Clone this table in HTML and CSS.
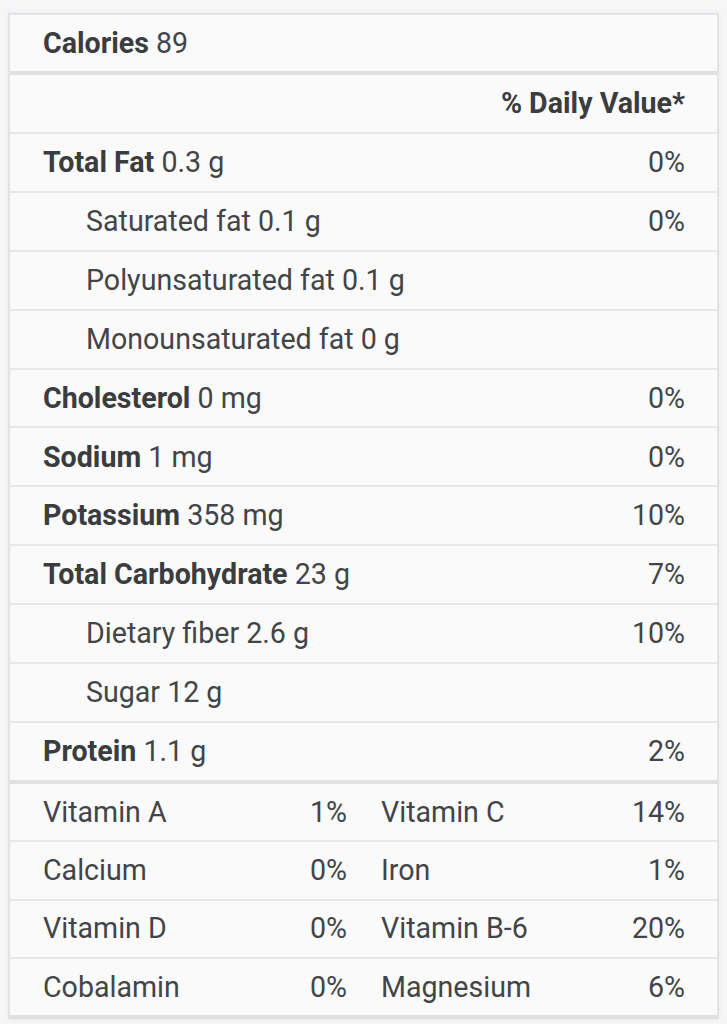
FILE: index.html
```html
<!DOCTYPE html>
<html>
<head>
<meta charset="utf-8">
<link rel="stylesheet" href="styles.css">
</head>
<body>
<div class="label">
  <div class="row row-cal"><span><b>Calories</b> 89</span></div>
  <div class="row row-dv"><span></span><b>% Daily Value*</b></div>
  <div class="row"><span><b>Total Fat</b> 0.3 g</span><span>0%</span></div>
  <div class="row sub"><span>Saturated fat 0.1 g</span><span>0%</span></div>
  <div class="row sub"><span>Polyunsaturated fat 0.1 g</span><span></span></div>
  <div class="row sub"><span>Monounsaturated fat 0 g</span><span></span></div>
  <div class="row"><span><b>Cholesterol</b> 0 mg</span><span>0%</span></div>
  <div class="row"><span><b>Sodium</b> 1 mg</span><span>0%</span></div>
  <div class="row"><span><b>Potassium</b> 358 mg</span><span>10%</span></div>
  <div class="row"><span><b>Total Carbohydrate</b> 23 g</span><span>7%</span></div>
  <div class="row sub"><span>Dietary fiber 2.6 g</span><span>10%</span></div>
  <div class="row sub"><span>Sugar 12 g</span><span></span></div>
  <div class="row row-thick"><span><b>Protein</b> 1.1 g</span><span>2%</span></div>
  <div class="vrow">
    <div class="vcell"><span>Vitamin A</span><span>1%</span></div>
    <div class="vcell"><span>Vitamin C</span><span>14%</span></div>
  </div>
  <div class="vrow">
    <div class="vcell"><span>Calcium</span><span>0%</span></div>
    <div class="vcell"><span>Iron</span><span>1%</span></div>
  </div>
  <div class="vrow">
    <div class="vcell"><span>Vitamin D</span><span>0%</span></div>
    <div class="vcell"><span>Vitamin B-6</span><span>20%</span></div>
  </div>
  <div class="vrow vrow-last">
    <div class="vcell"><span>Cobalamin</span><span>0%</span></div>
    <div class="vcell"><span>Magnesium</span><span>6%</span></div>
  </div>
</div>
</body>
</html>
```

FILE: styles.css
```css
html, body {
  margin: 0;
  padding: 0;
  background: #f6f6f6;
}
body {
  padding: 13px 8px 0 8px;
  height: 1024px;
  box-sizing: border-box;
  overflow: hidden;
  font-family: Roboto, "Liberation Sans", sans-serif;
  font-size: 28.6px;
  line-height: 1;
  color: #424548;
}
.label {
  background: #fafafa;
  border-left: 2px solid #e3e3e3;
  border-right: 2px solid #e3e3e3;
  border-top: 2px solid #dfe4ea;
  box-shadow: 0 0 5px rgba(0, 0, 0, 0.06);
}
b {
  font-weight: 700;
  color: #3a3d40;
}
.row {
  display: flex;
  justify-content: space-between;
  align-items: center;
  height: 56.9px;
  padding: 0 32px 0 33px;
  border-bottom: 2px solid #e6e9ec;
}
.row-cal {
  height: 56px;
  border-bottom: 4px solid #e0e0e0;
}
.row-dv {
  height: 57px;
}
.sub {
  padding-left: 76px;
}
.row-thick {
  border-bottom: 4px solid #e0e0e0;
}
.vrow {
  display: grid;
  grid-template-columns: 1fr 1fr;
  column-gap: 34px;
  align-items: center;
  height: 56.4px;
  padding: 0 32px 0 33px;
  border-bottom: 2px solid #e6e9ec;
}
.vrow-last {
  border-bottom: 4px solid #e0e0e0;
}
.vcell {
  display: flex;
  justify-content: space-between;
}
```
